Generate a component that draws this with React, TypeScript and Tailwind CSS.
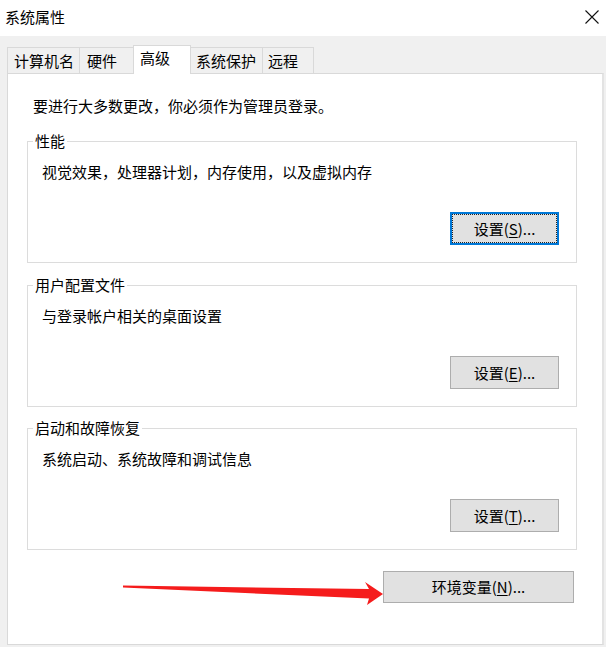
import React from "react";

function Btn({
  pre,
  k,
  post,
  focused,
  className,
}: {
  pre: string;
  k: string;
  post: string;
  focused?: boolean;
  className: string;
}) {
  return (
    <button
      className={
        focused
          ? "flex items-center justify-center bg-[#e1e1e1] border-2 border-[#0078d7] outline-1 outline-dotted outline-[#222] outline-offset-[-3px] text-[15px] leading-[20px] text-black " +
            className
          : "flex items-center justify-center bg-[#e1e1e1] border border-[#adadad] text-[15px] leading-[20px] text-black " +
            className
      }
    >
      <span>
        {pre}
        <span className="underline underline-offset-2">{k}</span>
        {post}
      </span>
    </button>
  );
}

function Group({
  title,
  desc,
  btn,
  className,
}: {
  title: string;
  desc: string;
  btn: React.ReactNode;
  className: string;
}) {
  return (
    <fieldset
      className={
        "ml-[19px] w-[550px] min-w-0 border border-[#dcdcdc] pl-[5px] pr-[17px] pb-[17px] " +
        className
      }
    >
      <legend className="px-[2px] h-[20px] leading-[20px] text-[15px]">{title}</legend>
      <div className="pl-[9px] pt-[11px] leading-[20px] text-[15px]">{desc}</div>
      <div className="mt-[30px] flex justify-end">{btn}</div>
    </fieldset>
  );
}

export default function App() {
  return (
    <div className="w-[606px] h-[647px] bg-[#f0f0f0] flex flex-col font-['Noto_Sans_CJK_SC','Noto_Sans_CJK_JP',sans-serif] text-[#000] text-[15px] overflow-hidden">
      {/* Title bar */}
      <div className="h-[36px] bg-white flex items-center justify-between pl-[5px] pr-[7px] shrink-0">
        <span className="leading-[20px] -mt-[2px]">系统属性</span>
        <svg width="14" height="14" viewBox="0 0 14 14" className="-mt-[3px]">
          <path d="M0.5 0.5 L13.5 13.5 M13.5 0.5 L0.5 13.5" stroke="#111" strokeWidth="1.1" fill="none" />
        </svg>
      </div>

      {/* Tabs */}
      <div className="mt-[9px] h-[28px] pl-[7px] flex items-end shrink-0 relative z-10">
        <div className="w-[72px] h-[26px] border-l border-t border-[#d9d9d9] bg-[#f0f0f0] pl-[6px] pt-[3px] leading-[20px]">
          计算机名
        </div>
        <div className="w-[54px] h-[26px] border-l border-t border-[#d9d9d9] bg-[#f0f0f0] pl-[7px] pt-[3px] leading-[20px]">
          硬件
        </div>
        <div className="w-[58px] h-[29px] -mb-px border-l border-t border-r border-[#d9d9d9] bg-white pl-[6px] pt-[2px] leading-[20px]">
          高级
        </div>
        <div className="w-[71px] h-[26px] border-t border-[#d9d9d9] bg-[#f0f0f0] pl-[5px] pt-[3px] leading-[20px]">
          系统保护
        </div>
        <div className="w-[52px] h-[26px] border-l border-t border-r border-[#d9d9d9] bg-[#f0f0f0] pl-[5px] pt-[3px] leading-[20px]">
          远程
        </div>
      </div>

      {/* Panel */}
      <div className="ml-[7px] w-[597px] flex-1 mb-[2px] bg-white border border-[#d9d9d9] border-r-2 border-r-[#e3e3e3] flex flex-col">
        <div className="pl-[25px] pt-[22px] leading-[20px]">要进行大多数更改，你必须作为管理员登录。</div>

        <Group
          className="mt-[15px]"
          title="性能"
          desc="视觉效果，处理器计划，内存使用，以及虚拟内存"
          btn={<Btn focused pre="设置(" k="S" post=")..." className="w-[109px] h-[33px]" />}
        />
        <Group
          className="mt-[12px]"
          title="用户配置文件"
          desc="与登录帐户相关的桌面设置"
          btn={<Btn pre="设置(" k="E" post=")..." className="w-[109px] h-[33px]" />}
        />
        <Group
          className="mt-[11px]"
          title="启动和故障恢复"
          desc="系统启动、系统故障和调试信息"
          btn={<Btn pre="设置(" k="T" post=")..." className="w-[109px] h-[33px]" />}
        />

        <div className="mt-[21px] pl-[112px] flex items-start">
          <svg width="263" height="36" viewBox="0 0 263 36" className="block shrink-0">
            <polygon
              points="3,14.6 249,18 245,11 263,23 247,34 249,27.5 3,16.6"
              fill="#f51c1c"
            />
          </svg>
          <Btn pre="环境变量(" k="N" post=")..." className="w-[191px] h-[32px]" />
        </div>
      </div>
    </div>
  );
}
